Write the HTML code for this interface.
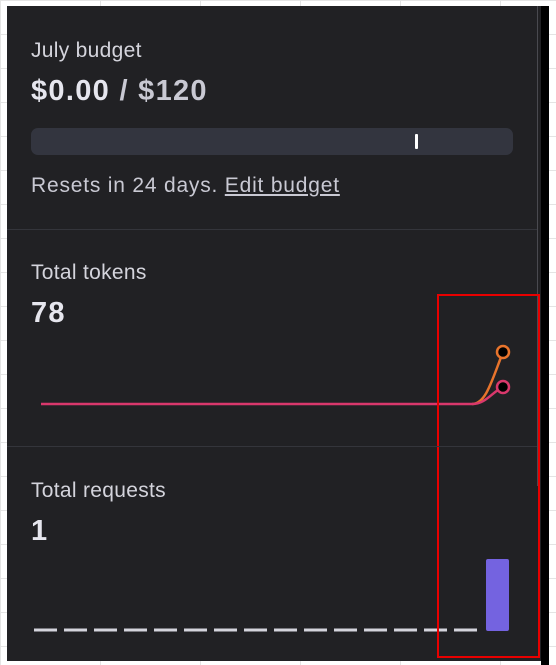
<!DOCTYPE html>
<html><head><style>
html,body{margin:0;padding:0;width:556px;height:665px;overflow:hidden;background:#fff;font-family:"Liberation Sans",sans-serif;}
.grid{position:absolute;inset:0;background-image:linear-gradient(#e4e4e4 1px,transparent 1px),linear-gradient(90deg,#e4e4e4 1px,transparent 1px);background-size:100px 34px;}
.panel{position:absolute;left:7px;top:6px;width:534px;height:655px;background:#212124;}
.blk{position:absolute;left:541px;top:6px;width:8px;height:659px;background:#000;}
.sb{position:absolute;left:537px;top:6px;width:1px;height:480px;background:#4a4a50;}
.t{position:absolute;left:31px;color:#d4d4dc;font-size:21px;letter-spacing:0.3px;white-space:nowrap;}
.v{position:absolute;left:31px;color:#e6e6ee;font-size:29px;font-weight:bold;letter-spacing:1.3px;white-space:nowrap;}
.div{position:absolute;left:7px;width:530px;height:1px;background:#34353b;}
</style></head><body>
<div class="grid"></div>
<div class="panel"></div>
<div class="blk"></div>
<div class="sb"></div>
<div class="t" style="top:39px">July budget</div>
<div class="v" style="top:75px">$0.00 <span style="color:#c9c9d3">/ $120</span></div>
<div style="position:absolute;left:31px;top:128px;width:482px;height:27px;background:#33353f;border-radius:7px"></div>
<div style="position:absolute;left:415px;top:134px;width:3px;height:15px;background:#fff;border-radius:1px"></div>
<div class="t" style="top:174px;color:#c9c9d3;letter-spacing:0.8px">Resets in 24 days. <span style="text-decoration:underline">Edit budget</span></div>
<div class="div" style="top:229px"></div>
<div class="t" style="top:261px">Total tokens</div>
<div class="v" style="top:297px">78</div>
<svg style="position:absolute;left:0;top:0" width="556" height="665">
<path d="M472 404 C486 404 492 380 503 352" stroke="#e8742c" stroke-width="2.5" fill="none"/>
<path d="M41 404 L472 404 C486 404 492 392 503 387" stroke="#d9386c" stroke-width="2.5" fill="none"/>
<circle cx="503" cy="352" r="6" fill="#000" stroke="#e8742c" stroke-width="2.5"/>
<circle cx="503" cy="387" r="6" fill="#000" stroke="#d9386c" stroke-width="2.5"/>
<line x1="34" y1="630" x2="480" y2="630" stroke="#d4d4dc" stroke-width="3" stroke-dasharray="23 7"/>
<rect x="486" y="559" width="23" height="72" rx="2" fill="#7463e0"/>
<rect x="438" y="295" width="101" height="362" fill="none" stroke="#e80000" stroke-width="2"/>
</svg>
<div class="div" style="top:446px"></div>
<div class="t" style="top:479px">Total requests</div>
<div class="v" style="top:515px">1</div>
</body></html>
